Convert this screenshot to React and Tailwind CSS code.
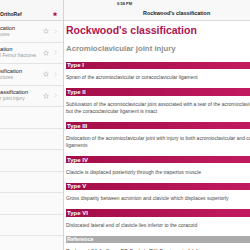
import React from 'react';

const rows = [
  { title: 'cation', sub: 'ures' },
  { title: 'ation', sub: 'l Femur fractures' },
  { title: 'sification', sub: 'ctures' },
  { title: 'assification', sub: 'r joint injury' },
  null, null, null, null, null, null, null
];

const types = [
  { label: 'Type I', text: ['Sprain of the acromioclavicular or coracoclavicular ligament'] },
  { label: 'Type II', text: [
    'Subluxation of the acromioclavicular joint associated with a tear of the acromioclavicular ligament,',
    'but the coracoclavicular ligament is intact'
  ] },
  { label: 'Type III', text: [
    'Dislocation of the acromioclavicular joint with injury to both acromioclavicular and coracoclavicular',
    'ligaments'
  ] },
  { label: 'Type IV', text: ['Clavicle is displaced posteriorly through the trapezius muscle'] },
  { label: 'Type V', text: ['Gross disparity between acromion and clavicle which displaces superiorly'] },
  { label: 'Type VI', text: ['Dislocated lateral end of clavicle lies inferior to the coracoid'] }
];

const Star = ({ className, filled }) => (
  <svg viewBox="0 0 24 24" className={className} fill={filled ? 'currentColor' : 'none'} stroke="currentColor" strokeWidth={filled ? 0 : 1.6} strokeLinejoin="round">
    <path d="M12 2.5l2.9 6.2 6.7.7-5 4.6 1.4 6.6L12 17.3l-6 3.3 1.4-6.6-5-4.6 6.7-.7z" />
  </svg>
);

const Chevron = () => (
  <svg viewBox="0 0 10 16" className="w-[3px] h-[5px] text-[#c8c8cc]" fill="none" stroke="currentColor" strokeWidth="2">
    <path d="M2 2l6 6-6 6" />
  </svg>
);

export default function App() {
  return (
    <div className="w-[250px] h-[250px] overflow-hidden flex items-start bg-white font-['Liberation_Sans',Arial,sans-serif]">
      {/* master list */}
      <div className="w-[64px] h-[250px] overflow-hidden shrink-0 bg-[#f7f7f7] border-r border-[#d4d4d4]">
        <div className="h-[8px]" />
        <div className="h-[13px] flex items-center justify-between pr-[5px] border-b border-[#d8d8d8]">
          <span className="text-[5px] font-bold text-[#222] leading-none">OrthoRef</span>
          <Star filled className="w-[6px] h-[6px] text-[#b3124f]" />
        </div>
        {rows.map((r, i) => (
          <div key={i} className="h-[21.5px] flex items-center border-b border-[#e4e4e4] bg-[#fafafa]">
            {r && (
              <>
                <div className="flex-1 min-w-0 flex flex-col">
                  <span className="text-[5.7px] text-[#222] leading-[7px] whitespace-nowrap">{r.title}</span>
                  <span className="text-[4.8px] text-[#9a9a9a] leading-[6px] whitespace-nowrap">{r.sub}</span>
                </div>
                <Star className="w-[6px] h-[6px] text-[#a0a0a0] mr-[5px]" />
                <div className="mr-[6px] flex"><Chevron /></div>
              </>
            )}
          </div>
        ))}
      </div>

      {/* detail */}
      <div className="flex-1 min-w-0 h-[250px] overflow-hidden">
        <div className="h-[8px] bg-[#f8f8f8] flex items-center">
          <span className="ml-[53px] text-[4px] font-bold text-[#333] leading-none">9:58 PM</span>
        </div>
        <div className="h-[13px] bg-[#f8f8f8] border-b border-[#d8d8d8] flex items-center pl-[79px]">
          <span className="text-[5.4px] font-bold text-[#222] whitespace-nowrap leading-none">Rockwood's classification</span>
        </div>
        <div className="pl-[2px]">
          <h1 className="mt-[3px] text-[10.5px] leading-[12px] font-bold text-[#b0134f] whitespace-nowrap">Rockwood's classification</h1>
          <h2 className="mt-[8px] text-[7.8px] leading-[10px] font-bold text-[#8e8e8e] whitespace-nowrap">Acromioclavicular joint injury</h2>
          <div className="mt-[7.5px]">
            {types.map((t) => (
              <div key={t.label}>
                <div className="h-[7.3px] bg-gradient-to-r from-[#a30e48] to-[#c21a5f] flex items-center pl-[1px]">
                  <span className="text-[6px] font-bold text-white leading-none">{t.label}</span>
                </div>
                <div className="pt-[5.5px] pb-[7px]">
                  {t.text.map((line) => (
                    <p key={line} className="text-[5px] leading-[7px] text-[#4a4a4a] whitespace-nowrap">{line}</p>
                  ))}
                </div>
              </div>
            ))}
            <div className="h-[7px] bg-[#ababab] flex items-center pl-[1px]">
              <span className="text-[5.5px] font-bold text-white leading-none">Reference</span>
            </div>
            <p className="mt-[5px] text-[5px] leading-[7px] text-[#4a4a4a] whitespace-nowrap">Rockwood CA Jr, Green DP, Bucholz RW. Fractures in Adults.</p>
          </div>
        </div>
      </div>
    </div>
  );
}
